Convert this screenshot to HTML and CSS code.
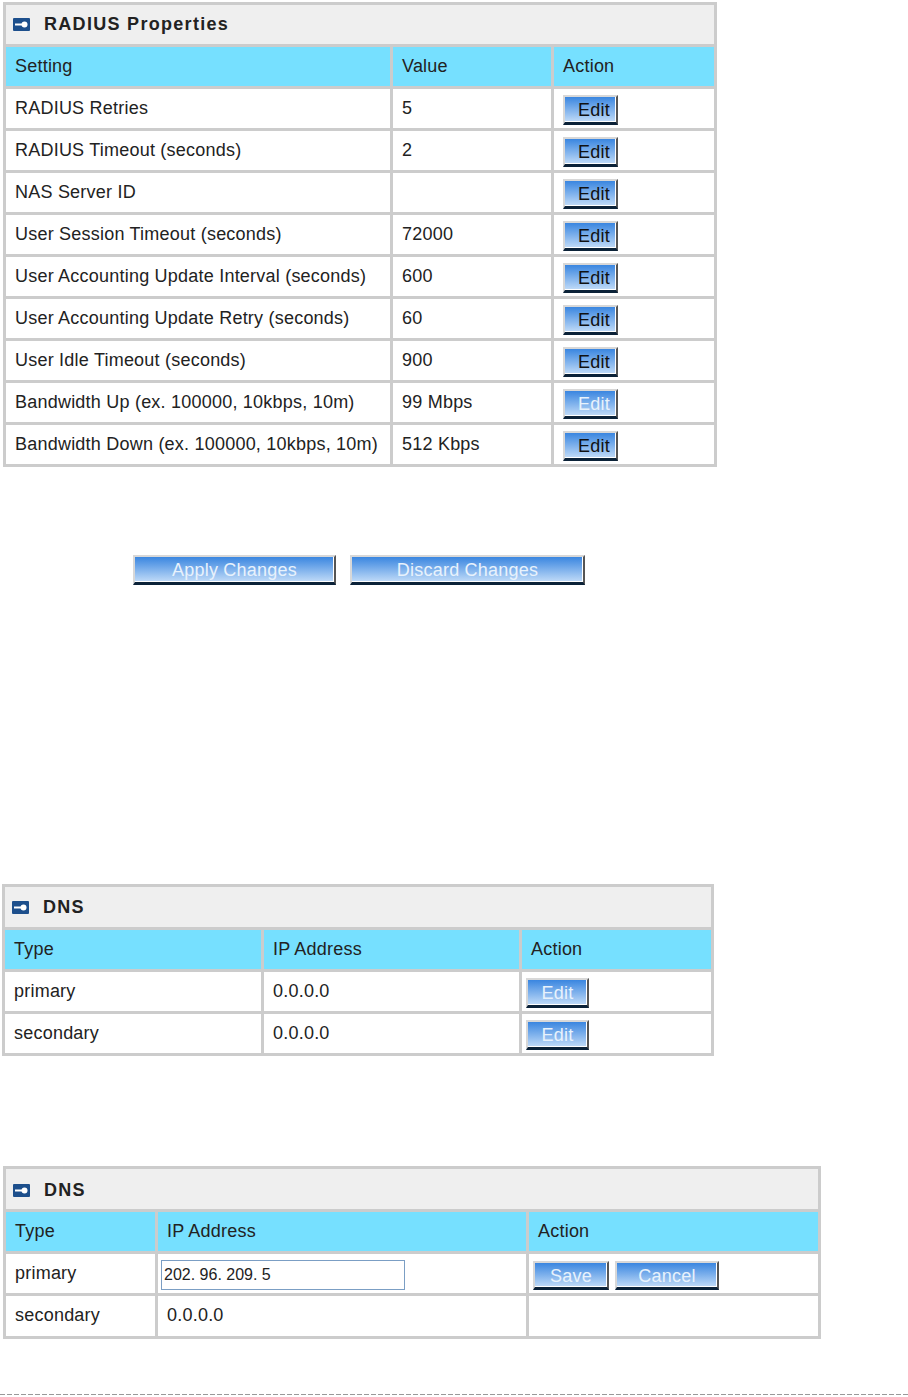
FILE: index.html
```html
<!DOCTYPE html>
<html lang="en">
<head>
<meta charset="utf-8">
<title>RADIUS Properties</title>
<link rel="stylesheet" href="styles.css">
</head>
<body>
<table class="panel panel-radius">
  <colgroup><col class="r1"><col class="r2"><col class="r3"></colgroup>
  <tr><td colspan="3" class="title"><svg class="ico" viewBox="0 0 17 13"><rect width="17" height="13" rx="1" fill="#1d4f8c"/><path d="M2 5.500h7v2H2z" fill="#fff"/><circle cx="11.500" cy="6.500" r="3" fill="#fff"/></svg>RADIUS Properties</td></tr>
  <tr class="head"><td>Setting</td><td>Value</td><td>Action</td></tr>
  <tr><td>RADIUS Retries</td><td>5</td><td><button class="btn dark edit">Edit</button></td></tr>
  <tr><td>RADIUS Timeout (seconds)</td><td>2</td><td><button class="btn dark edit">Edit</button></td></tr>
  <tr><td>NAS Server ID</td><td></td><td><button class="btn dark edit">Edit</button></td></tr>
  <tr><td>User Session Timeout (seconds)</td><td>72000</td><td><button class="btn dark edit">Edit</button></td></tr>
  <tr><td>User Accounting Update Interval (seconds)</td><td>600</td><td><button class="btn dark edit">Edit</button></td></tr>
  <tr><td>User Accounting Update Retry (seconds)</td><td>60</td><td><button class="btn dark edit">Edit</button></td></tr>
  <tr><td>User Idle Timeout (seconds)</td><td>900</td><td><button class="btn dark edit">Edit</button></td></tr>
  <tr><td>Bandwidth Up (ex. 100000, 10kbps, 10m)</td><td>99 Mbps</td><td><button class="btn edit">Edit</button></td></tr>
  <tr><td>Bandwidth Down (ex. 100000, 10kbps, 10m)</td><td>512 Kbps</td><td><button class="btn dark edit">Edit</button></td></tr>
</table>
<div class="actions">
  <button class="btn apply">Apply Changes</button>
  <button class="btn discard">Discard Changes</button>
</div>
<table class="panel panel-dns">
  <colgroup><col class="d1"><col class="d2"><col class="d3"></colgroup>
  <tr><td colspan="3" class="title"><svg class="ico" viewBox="0 0 17 13"><rect width="17" height="13" rx="1" fill="#1d4f8c"/><path d="M2 5.500h7v2H2z" fill="#fff"/><circle cx="11.500" cy="6.500" r="3" fill="#fff"/></svg>DNS</td></tr>
  <tr class="head"><td>Type</td><td>IP Address</td><td>Action</td></tr>
  <tr><td>primary</td><td>0.0.0.0</td><td><button class="btn wide-edit">Edit</button></td></tr>
  <tr><td>secondary</td><td>0.0.0.0</td><td><button class="btn wide-edit">Edit</button></td></tr>
</table>
<table class="panel panel-edit">
  <colgroup><col class="e1"><col class="e2"><col class="e3"></colgroup>
  <tr><td colspan="3" class="title"><svg class="ico" viewBox="0 0 17 13"><rect width="17" height="13" rx="1" fill="#1d4f8c"/><path d="M2 5.500h7v2H2z" fill="#fff"/><circle cx="11.500" cy="6.500" r="3" fill="#fff"/></svg>DNS</td></tr>
  <tr class="head"><td>Type</td><td>IP Address</td><td>Action</td></tr>
  <tr><td>primary</td><td class="tight"><input class="ip" type="text" value="202. 96. 209. 5"></td><td class="tight"><button class="btn save">Save</button><button class="btn cancel">Cancel</button></td></tr>
  <tr class="last"><td>secondary</td><td>0.0.0.0</td><td></td></tr>
</table>
<div class="rule"></div>
</body>
</html>
```

FILE: styles.css
```css
html, body { margin: 0; padding: 0; background: #fff; }
body {
  width: 908px;
  height: 1397px;
  overflow: hidden;
  font-family: "Liberation Sans", Arial, sans-serif;
  font-size: 18px;
  letter-spacing: 0.22px;
  color: #222;
  display: flex;
  flex-direction: column;
  align-items: flex-start;
}
.panel {
  flex: none;
  border-collapse: collapse;
  table-layout: fixed;
  border: 3px solid #ccc;
}
.panel td {
  border: 3px solid #ccc;
  height: 38px;
  padding: 0 0 1px 9px;
  box-sizing: content-box;
  white-space: nowrap;
  vertical-align: middle;
}
.panel td.tight { padding-left: 3px; padding-bottom: 0; height: 39px; }
.panel .title {
  background: #efefef;
  font-weight: bold;
  letter-spacing: 1.3px;
  padding-left: 7px;
  color: #222;
}
.head td { background: #76e0ff; }
.ico { width: 17px; height: 13px; margin-right: 14px; vertical-align: -1px; }
.panel-radius { width: 711px; margin: 2px 0 0 3px; }
.r1 { width: 387px; } .r2 { width: 161px; } .r3 { width: 163px; }
.panel-dns { width: 709px; margin: 0 0 0 2px; }
.d1 { width: 259px; } .d2 { width: 258px; } .d3 { width: 192px; }
.panel-edit { width: 815px; margin: 110px 0 0 3px; }
.e1 { width: 152px; } .e2 { width: 371px; } .e3 { width: 292px; }
.panel-dns .title { height: 37px; padding-top: 2px; }
.panel-edit .title { height: 35px; padding-top: 4px; }
.panel-edit .last td { height: 39px; }

.btn {
  font: inherit;
  letter-spacing: inherit;
  color: #e8f2fc;
  padding: 1px 0 0;
  height: 30px;
  line-height: 22px;
  box-sizing: border-box;
  background: linear-gradient(#3a86e0, #c2dcf8);
  border-style: solid;
  border-width: 2px 2px 3px 2px;
  border-color: #d8d8d8 #555 #0b2238 #d8d8d8;
  box-shadow: inset -1px -1px 0 #fff;
  display: inline-block;
  vertical-align: middle;
}
.btn.dark { color: #111; }
.edit { width: 55px; padding-left: 7px; margin: 3px 0 0; }
.wide-edit { width: 63px; margin: 3px 0 0 -5px; }
.actions {
  flex: none;
  display: flex;
  gap: 14px;
  margin: 88px 0 299px 133px;
}
.apply { width: 203px; }
.discard { width: 235px; }
.save, .cancel { height: 29px; margin-top: 4px; }
.save { width: 76px; margin-left: 1px; }
.cancel { width: 104px; margin-left: 6px; }
.ip {
  width: 244px;
  height: 30px;
  box-sizing: border-box;
  border: 1px solid #7b9ec4;
  padding: 0 2px;
  margin-top: 2px;
  font: inherit;
  font-size: 16px;
  letter-spacing: 0;
  color: #222;
  background: #fff;
}
.rule {
  flex: none;
  width: 908px;
  height: 1px;
  background: repeating-linear-gradient(90deg, #999 0 5px, transparent 5px 7px);
  margin-top: 55px;
}
```
